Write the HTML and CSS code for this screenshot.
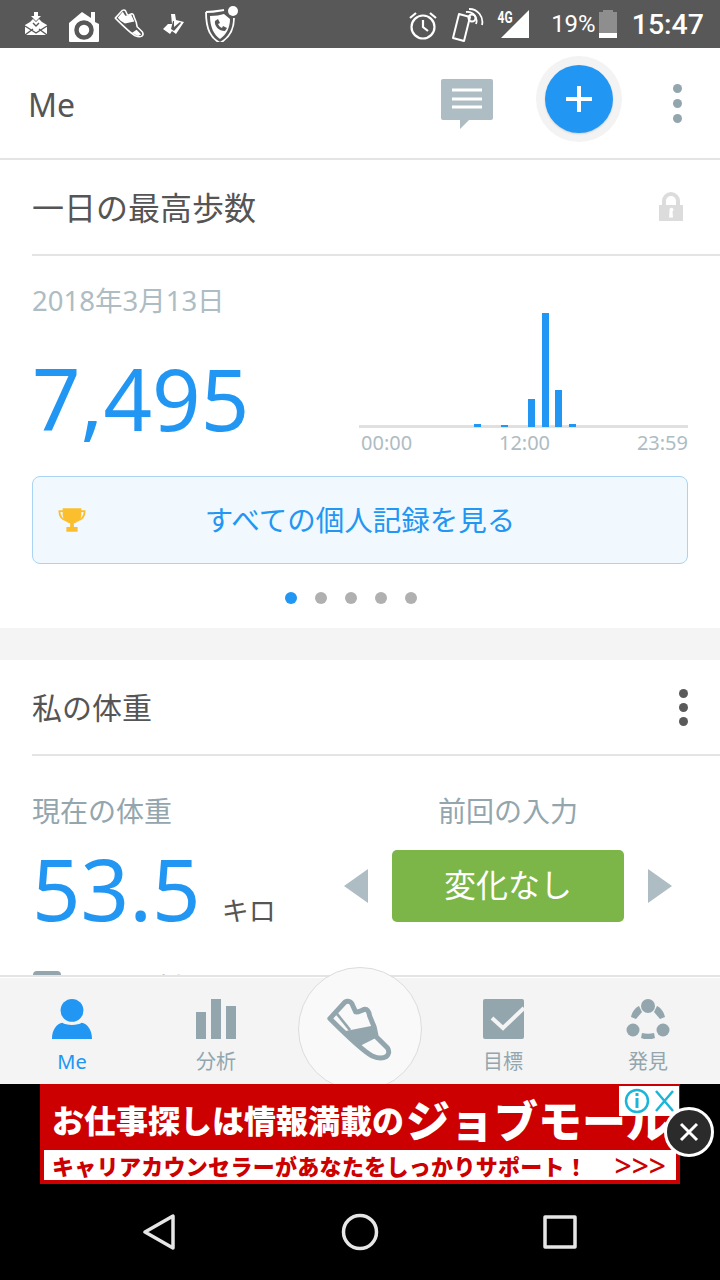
FILE: index.html
```html
<!DOCTYPE html>
<html lang="ja">
<head>
    <meta charset="UTF-8">
    <meta name="viewport" content="width=device-width, initial-scale=1.0">
    <title>Me</title>
    <link rel="stylesheet" href="styles.css">
</head>
<body>
<div class="screen">
    <div class="status-bar">
        <div class="status-icons">
            <svg width="24" height="24" viewBox="0 0 24 24"><path fill="#fff" d="M10 0h4v4h3l-5 5-5-5h3z"/><path fill="#fff" d="M12 10l3-3 3 3 5 3v10H1V13l5-3 3-3z"/><path fill="none" stroke="#585858" stroke-width="1.4" d="M1 14l11 7 11-7M1 23l8-6M23 23l-8-6M9 11l3 3 3-3"/></svg>
            <svg class="st-camera" width="32" height="32" viewBox="0 0 32 32"><path fill="#fff" d="M1 30V12L14 1l9 6V1h4v10l4 2v17a1 1 0 0 1-1 1H2a1 1 0 0 1-1-1z"/><circle cx="16" cy="19" r="7.500" fill="none" stroke="#585858" stroke-width="4.500"/></svg>
            <svg class="st-shoe" width="33" height="32" viewBox="90 90 210 205"><path fill="none" stroke="#fff" stroke-width="10" stroke-linejoin="round" d="M104 155l46-50c8-4 16-2 20 4l12 26c8 2 18-6 28-8 8 0 12 8 14 20l14 34 6 29 34 34c6 10 4 20-4 26-10 6-28 4-42-2-30-15-85-70-128-113z"/><path fill="#fff" d="M138 172l-18-20 32-38 16 26 38-6 20 42-60 14z"/><path fill="#fff" d="M210 250l30-20 30 30-20 10z"/></svg>
            <svg class="st-tick" width="24" height="24" viewBox="0 0 24 24"><path fill="#fff" d="M10 2h4l1 6 8 2-8 12-4-3-2 3-7-5 5-5h4z"/><path fill="#585858" d="M12 9h1v6l6-5 1 1-7 8-3-2z"/></svg>
            <svg class="st-shield" width="36" height="36" viewBox="0 0 36 36"><path fill="none" stroke="#fff" stroke-width="1.800" d="M2 6c8 0 12-1 18-2M30 12c0 12-5 20-14 25C7 32 2 24 2 6"/><path fill="#fff" d="M6 10c6 0 10-1 14-2l6 5c0 9-4 16-10 20C10 29 6 21 6 10z"/><path fill="#585858" d="M11 15l3-2 2 4-2 1c1 2 2 3 4 4l1-2 4 2-2 3c-6 0-11-5-10-10z"/><circle cx="29" cy="5" r="5" fill="#fff"/></svg>
        </div>
        <div class="status-right">
            <svg class="st-alarm" width="30" height="30" viewBox="0 0 30 30"><circle cx="15" cy="16" r="11.500" fill="none" stroke="#fff" stroke-width="2.200"/><path fill="none" stroke="#fff" stroke-width="2.200" d="M15 9v7l5 4M2 7l6-5M28 7l-6-5"/></svg>
            <svg class="st-nfc" width="36" height="36" viewBox="0 0 36 36"><path fill="none" stroke="#fff" stroke-width="2" stroke-linejoin="round" d="M8 6l11 3-6 24-11-3z"/><path fill="none" stroke="#fff" stroke-width="1.800" d="M15 4a9 9 0 0 1 10 12M18 1a13 13 0 0 1 13 16"/><circle cx="21" cy="10" r="3.500" fill="none" stroke="#fff" stroke-width="2"/></svg>
            <div class="st-signal">
                <span class="st-4g">4G</span>
                <svg width="28" height="28" viewBox="0 0 28 28"><path fill="#fff" d="M0 28L28 0v28z"/></svg>
            </div>
            <span class="st-batt-text">19%</span>
            <div class="st-batt"><span class="st-batt-cap"></span><span class="st-batt-level"></span></div>
            <span class="st-time">15:47</span>
        </div>
    </div>

    <header class="app-bar">
        <h1 class="app-title">Me</h1>
        <div class="app-actions">
            <svg class="icon-chat" width="52" height="52" viewBox="0 0 52 52"><path fill="#aebcc3" d="M2 1h48a2 2 0 0 1 2 2v37a2 2 0 0 1-2 2H28l-9 9v-9H2a2 2 0 0 1-2-2V3a2 2 0 0 1 2-2z"/><path stroke="#fff" stroke-width="3" d="M11 12h30M11 21h30M11 29h30"/></svg>
            <div class="add-ring"><button class="add-btn">
                <svg width="26" height="26" viewBox="0 0 26 26"><path stroke="#fff" stroke-width="4" d="M13 0v26M0 13h26"/></svg>
            </button></div>
            <div class="dots"><span></span><span></span><span></span></div>
        </div>
    </header>

    <main class="content">
        <section class="card card-steps">
            <div class="card-head">
                <h2>一日の最高歩数</h2>
                <svg width="26" height="30" viewBox="0 0 26 30"><path fill="none" stroke="#dcdcdc" stroke-width="4" d="M6 14V9a7 7 0 0 1 14 0v5"/><path fill="#dcdcdc" d="M1 13h24v16H1z"/><path fill="#fff" d="M11.500 18a2 2 0 1 1 3 1.500l.5 6h-4l.5-6z"/></svg>
            </div>
            <div class="steps-body">
                <div class="steps-left">
                    <div class="steps-date">2018年3月13日</div>
                    <div class="steps-num">7,495</div>
                </div>
                <div class="chart">
                    <div class="chart-bars">
                        <span></span><span></span><span></span><span></span><span></span><span></span><span></span><span></span>
                        <span style="height:3px"></span><span></span>
                        <span style="height:2px"></span><span></span>
                        <span style="height:28px"></span>
                        <span style="height:114px"></span>
                        <span style="height:37px"></span>
                        <span style="height:3px"></span>
                        <span></span><span></span><span></span><span></span><span></span><span></span><span></span><span></span>
                    </div>
                    <div class="chart-labels"><span>00:00</span><span>12:00</span><span>23:59</span></div>
                </div>
            </div>
            <a class="records-btn">
                <svg width="28" height="25" viewBox="0 0 30 26"><path fill="none" stroke="#fbbf2d" stroke-width="2" d="M6 3H1.500c0 5 3 9 8 10M24 3h4.500c0 5-3 9-8 10"/><path fill="#fbbf2d" d="M5 0h20v6c0 6-4 9-8 10v4h4v5H9v-5h4v-4C9 15 5 12 5 6z"/></svg>
                <span>すべての個人記録を見る</span>
            </a>
            <div class="pager"><span class="on"></span><span></span><span></span><span></span><span></span></div>
        </section>

        <section class="card card-weight">
            <div class="card-head">
                <h2 class="small">私の体重</h2>
                <div class="dots dark"><span></span><span></span><span></span></div>
            </div>
            <div class="weight-body">
                <div class="weight-now">
                    <div class="weight-label">現在の体重</div>
                    <div class="weight-val"><span class="num">53.5</span><span class="unit">キロ</span></div>
                </div>
                <div class="weight-prev">
                    <div class="weight-label">前回の入力</div>
                    <div class="prev-row">
                        <span class="arrow left"></span>
                        <div class="prev-tag">変化なし</div>
                        <span class="arrow right"></span>
                    </div>
                </div>
            </div>
            <div class="weight-more"><span class="check"></span><span>メモを追加</span></div>
        </section>
    </main>

    <nav class="tabs">
        <a class="tab active">
            <svg width="40" height="40" viewBox="0 0 42 42"><circle cx="21" cy="12" r="12" fill="#2196f3"/><path fill="#2196f3" d="M0 42c0-10 5-16 11-17 3 3 17 3 20 0 6 1 11 7 11 17z"/></svg>
            <span>Me</span>
        </a>
        <a class="tab">
            <svg width="40" height="40" viewBox="0 0 40 40"><path fill="#93a6ae" d="M0 13h10v27H0zM15 0h10v40H15zM30 7h10v33H30z"/></svg>
            <span>分析</span>
        </a>
        <div class="tab-gap"></div>
        <a class="tab tab-goal">
            <svg width="41" height="40" viewBox="0 0 41 40"><path fill="#93a6ae" d="M2 0h37a2 2 0 0 1 2 2v36a2 2 0 0 1-2 2H2a2 2 0 0 1-2-2V2a2 2 0 0 1 2-2z"/><path fill="none" stroke="#f4f4f4" stroke-width="4" d="M9 19l11 10 21-20"/></svg>
            <span>目標</span>
        </a>
        <a class="tab">
            <svg width="44" height="40" viewBox="0 0 44 40"><g fill="#93a6ae"><circle cx="22" cy="7" r="7"/><circle cx="7" cy="31" r="6.500"/><circle cx="37" cy="31" r="6.500"/><path d="M13 7l3 6-6 7-5-2c1-5 4-9 8-11zM31 7l-3 6 6 7 5-2c-1-5-4-9-8-11zM16 34c4 1 8 1 12 0l1 5c-5 2-9 2-14 0z"/></g></svg>
            <span>発見</span>
        </a>
        <div class="walk-btn">
            <svg width="70" height="68" viewBox="90 90 210 205"><path fill="none" stroke="#93a6ae" stroke-width="15" stroke-linejoin="round" d="M104 155l46-50c8-4 16-2 20 4l12 26c8 2 18-6 28-8 8 0 12 8 14 20l14 34 6 29 34 34c6 10 4 20-4 26-10 6-28 4-42-2-30-15-85-70-128-113z"/><path fill="none" stroke="#93a6ae" stroke-width="8" d="M125 140l40 50"/><path fill="#93a6ae" d="M140 195l100-20 10 35-60 30z"/></svg>
        </div>
    </nav>

    <aside class="ad-bar">
        <div class="ad">
            <div class="ad-top"><span class="ad-small">お仕事探しは情報満載の</span><span class="ad-big">ジョブモール</span></div>
            <div class="ad-strip"><span>キャリアカウンセラーがあなたをしっかりサポート！</span><span class="ad-more">&gt;&gt;&gt;</span></div>
            <div class="ad-choice">
                <svg width="52" height="30" viewBox="0 0 52 30"><circle cx="14" cy="15" r="11" fill="none" stroke="#1cb5d8" stroke-width="2.500"/><path stroke="#1cb5d8" stroke-width="3" d="M14 12v10M14 7v3"/><path stroke="#1cb5d8" stroke-width="2.500" d="M33 5l17 20M50 5L33 25"/></svg>
            </div>
        </div>
        <button class="ad-close">
            <svg width="20" height="20" viewBox="0 0 20 20"><path stroke="#fff" stroke-width="3" d="M2 2l16 16M18 2L2 18"/></svg>
        </button>
    </aside>

    <footer class="nav-bar">
        <svg width="34" height="38" viewBox="1 0 34 38"><path fill="none" stroke="#e6e6e6" stroke-width="3.500" stroke-linejoin="round" d="M31 3v32L3 19z"/></svg>
        <svg width="38" height="38" viewBox="0 0 38 38"><circle cx="19" cy="19" r="16.500" fill="none" stroke="#e6e6e6" stroke-width="3.500"/></svg>
        <svg width="34" height="34" viewBox="0 0 34 34"><path fill="none" stroke="#e6e6e6" stroke-width="3.500" stroke-linejoin="round" d="M2 2h30v30H2z"/></svg>
    </footer>
</div>
</body>
</html>
```

FILE: styles.css
```css
* {
    box-sizing: border-box;
}
body {
    margin: 0;
    font-family: "Noto Sans", "Noto Sans CJK JP", sans-serif;
    background-color: #000;
}
.screen {
    display: flex;
    flex-direction: column;
    width: 720px;
    height: 1280px;
    overflow: hidden;
    position: relative;
}
.status-bar {
    display: flex;
    justify-content: space-between;
    align-items: center;
    flex: none;
    height: 48px;
    padding: 0 16px 0 24px;
    background-color: #585858;
    color: #fff;
    font-family: Roboto, sans-serif;
}
.status-icons,
.status-right {
    display: flex;
    align-items: center;
}
.status-icons svg {
    flex: none;
}
.st-camera {
    margin-left: 20px;
    margin-top: 6px;
}
.st-shoe {
    margin-left: 13px;
    margin-top: 0;
}
.st-tick {
    margin-left: 15px;
}
.st-shield {
    margin-left: 19px;
}
.st-alarm {
    margin-top: 4px;
}
.st-nfc {
    margin-left: 13px;
    margin-top: 4px;
}
.st-signal {
    position: relative;
    width: 28px;
    height: 28px;
    margin-left: 14px;
}
.st-4g {
    position: absolute;
    left: -6px;
    top: -2px;
    font-size: 16px;
    font-weight: 700;
    transform: scaleX(0.75);
}
.st-batt-text {
    margin-left: 22px;
    font-size: 24px;
}
.st-batt {
    position: relative;
    width: 18px;
    height: 26px;
    margin-left: 3px;
    margin-top: 2px;
    background-color: #8e8e8e;
}
.st-batt-cap {
    position: absolute;
    left: 4px;
    top: -2px;
    width: 10px;
    height: 2px;
    background-color: #8e8e8e;
}
.st-batt-level {
    position: absolute;
    left: 0;
    right: 0;
    bottom: 0;
    height: 5px;
    background-color: #fff;
}
.st-time {
    margin-left: 15px;
    font-size: 28.500px;
    font-weight: 500;
}
.app-bar {
    display: flex;
    justify-content: space-between;
    align-items: center;
    flex: none;
    height: 112px;
    padding: 0 38px 0 28px;
    background-color: #fff;
    border-bottom: 2px solid #e4e4e4;
}
.app-title {
    margin: 2px 0 0;
    font-size: 32px;
    font-weight: 400;
    color: #555;
}
.app-actions {
    display: flex;
    align-items: center;
}
.icon-chat {
    margin-top: 2px;
}
.add-ring {
    display: flex;
    align-items: center;
    justify-content: center;
    width: 86px;
    height: 86px;
    margin-left: 43px;
    margin-bottom: 8px;
    border-radius: 50%;
    background-color: #f3f3f3;
}
.add-btn {
    display: flex;
    align-items: center;
    justify-content: center;
    width: 68px;
    height: 68px;
    padding: 0;
    border: none;
    border-radius: 50%;
    background-color: #2196f3;
    box-shadow: 0 1px 2px rgba(0, 0, 0, 0.15);
}
.dots {
    display: flex;
    flex-direction: column;
    gap: 6px;
    margin-left: 51px;
}
.dots span {
    width: 9px;
    height: 9px;
    border-radius: 50%;
    background-color: #93a6ae;
}
.dots.dark {
    gap: 5px;
    margin-left: 0;
    margin-right: -4px;
}
.dots.dark span {
    background-color: #5a5a5a;
}
.content {
    flex: 1;
    min-height: 0;
    overflow: hidden;
    background-color: #f4f4f4;
}
.card {
    background-color: #fff;
}
.card-steps {
    height: 468px;
    margin-bottom: 32px;
}
.card-head {
    display: flex;
    justify-content: space-between;
    align-items: center;
    height: 96px;
    margin-left: 32px;
    padding-right: 36px;
    border-bottom: 2px solid #e4e4e4;
}
.card-head h2 {
    margin: 0 0 2px;
    font-size: 32px;
    font-weight: 400;
    color: #555;
}
.card-head h2.small {
    font-size: 30px;
}
.steps-body {
    display: flex;
    justify-content: space-between;
    height: 220px;
    padding: 0 32px;
}
.steps-date {
    margin-top: 26px;
    font-size: 27.500px;
    line-height: 38px;
    color: #aebcc3;
}
.steps-num {
    margin-top: 18px;
    font-size: 85px;
    line-height: 120px;
    color: #2196f3;
}
.chart {
    width: 329px;
}
.chart-bars {
    display: flex;
    align-items: flex-end;
    height: 116px;
    margin-top: 56px;
    padding-left: 3px;
    border-bottom: 3px solid #e0e0e0;
}
.chart-bars span {
    flex: 1;
    height: 0;
    margin-bottom: -2px;
    padding: 0 3.350px;
    background-color: #2196f3;
    background-clip: content-box;
}
.chart-labels {
    display: flex;
    justify-content: space-between;
    padding: 1px 0 0 2px;
    font-size: 20px;
    line-height: 28px;
    color: #aebcc3;
}
.records-btn {
    display: flex;
    align-items: center;
    height: 88px;
    margin: 0 32px;
    padding-left: 25px;
    background-color: #f1f8fe;
    border: 1px solid #a9d4f3;
    border-radius: 8px;
    color: #2196f3;
    font-size: 28.500px;
}
.records-btn span {
    flex: 1;
    padding: 0 53px 3px 0;
    text-align: center;
}
.pager {
    display: flex;
    justify-content: center;
    gap: 18px;
    margin-top: 28px;
    padding-right: 18px;
}
.pager span {
    width: 12px;
    height: 12px;
    border-radius: 50%;
    background-color: #b0b0b0;
}
.pager .on {
    background-color: #2196f3;
}
.weight-body {
    display: flex;
    height: 214px;
    padding: 0 48px 0 32px;
}
.weight-now {
    width: 312px;
}
.weight-label {
    margin-top: 35px;
    font-size: 28px;
    line-height: 40px;
    color: #93a6ae;
}
.weight-val {
    display: flex;
    align-items: baseline;
    margin-top: 11px;
}
.weight-val .num {
    font-size: 85px;
    line-height: 92px;
    color: #2196f3;
}
.weight-val .unit {
    margin-left: 21px;
    font-size: 27px;
    color: #555;
}
.weight-prev {
    flex: 1;
    text-align: center;
}
.prev-row {
    display: flex;
    align-items: center;
    justify-content: space-between;
    margin-top: 19px;
}
.prev-tag {
    width: 232px;
    height: 72px;
    border-radius: 5px;
    background-color: #7cb548;
    color: #fff;
    font-size: 32px;
    line-height: 70px;
}
.arrow {
    width: 0;
    height: 0;
    border-top: 17px solid transparent;
    border-bottom: 17px solid transparent;
}
.arrow.left {
    border-right: 24px solid #aebcc3;
}
.arrow.right {
    border-left: 24px solid #aebcc3;
}
.weight-more {
    display: flex;
    align-items: flex-start;
    gap: 16px;
    margin-top: 1px;
    padding-left: 33px;
    font-size: 24px;
    line-height: 30px;
    color: #777;
}
.check {
    width: 28px;
    height: 30px;
    border-radius: 4px;
    background-color: #93a6ae;
}
.tabs {
    display: flex;
    position: relative;
    flex: none;
    height: 109px;
    padding-top: 22px;
    background-color: #f4f4f4;
    border-top: 2px solid #e4e4e4;
    box-shadow: inset 0 1px 0 #fff;
}
.tab {
    display: flex;
    flex-direction: column;
    align-items: center;
    width: 144px;
    color: #93a6ae;
    font-size: 20px;
    line-height: 28px;
}
.tab span {
    margin-top: 9px;
}
.tab.active {
    color: #2196f3;
}
.tab-gap {
    width: 144px;
}
.tab-goal {
    padding-right: 2px;
}
.walk-btn {
    display: flex;
    align-items: center;
    justify-content: center;
    position: absolute;
    left: 298px;
    top: -10px;
    width: 124px;
    height: 124px;
    padding-top: 4px;
    border: 1px solid #dcdcdc;
    border-radius: 50%;
    background-color: #f9f9f9;
}
.ad-bar {
    position: relative;
    flex: none;
    height: 100px;
    padding-left: 40px;
    background-color: #000;
}
.ad {
    position: relative;
    width: 640px;
    height: 100px;
    padding: 0 4px 4px;
    background-color: #cc0000;
    font-weight: 900;
    overflow: hidden;
}
.ad-top {
    display: flex;
    align-items: center;
    height: 66px;
    padding: 4px 0 0 8px;
    color: #fff;
    white-space: nowrap;
}
.ad-small {
    font-size: 32px;
}
.ad-big {
    margin-left: 2px;
    font-size: 44px;
}
.ad-strip {
    display: flex;
    justify-content: space-between;
    align-items: center;
    height: 30px;
    padding: 0 10px 0 8px;
    background-color: #fff;
    color: #cc0000;
    font-size: 22px;
    letter-spacing: 0.300px;
    white-space: nowrap;
}
.ad-more {
    font-size: 30px;
    font-weight: 500;
    letter-spacing: 0;
}
.ad-choice {
    position: absolute;
    top: 2px;
    right: 1px;
    display: flex;
    align-items: center;
    width: 60px;
    height: 30px;
    padding-left: 4px;
    background-color: #fff;
}
.ad-close {
    display: flex;
    align-items: center;
    justify-content: center;
    position: absolute;
    left: 664px;
    top: 23px;
    width: 50px;
    height: 50px;
    padding: 0;
    border: 3px solid #fff;
    border-radius: 50%;
    background-color: #2b2b2b;
}
.nav-bar {
    display: flex;
    justify-content: space-between;
    align-items: center;
    flex: none;
    height: 96px;
    padding: 0 143px 0 143px;
    background-color: #000;
}
```
